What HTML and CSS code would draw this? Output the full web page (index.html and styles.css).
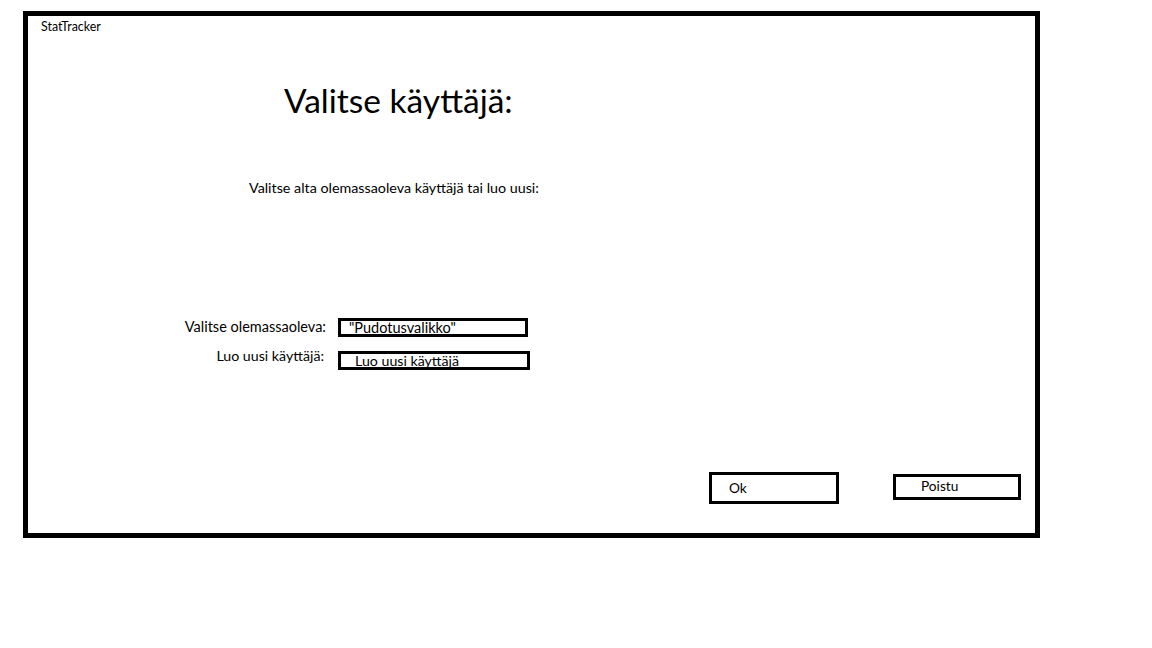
FILE: index.html
```html
<!DOCTYPE html>
<html lang="fi">
<head>
<meta charset="utf-8">
<title>StatTracker</title>
<link rel="stylesheet" href="styles.css">
</head>
<body>
<div class="frame">
  <div class="brand">StatTracker</div>
  <h1 class="heading">Valitse käyttäjä:</h1>
  <p class="intro">Valitse alta olemassaoleva käyttäjä tai luo uusi:</p>
  <div class="form">
    <div class="label label-first">Valitse olemassaoleva:</div>
    <div class="field field-select">"Pudotusvalikko"</div>
    <div class="label label-second">Luo uusi käyttäjä:</div>
    <div class="field field-new">Luo uusi käyttäjä</div>
  </div>
  <div class="actions">
    <div class="btn btn-ok">Ok</div>
    <div class="btn btn-exit">Poistu</div>
  </div>
</div>
</body>
</html>
```
FILE: styles.css
```css
html, body {
  margin: 0;
  padding: 0;
  background: #fff;
}
.frame {
  margin: 11px 0 0 23px;
  width: 1017px;
  height: 527px;
  border: 5px solid #000;
  box-sizing: border-box;
  font-family: Lato, "Open Sans", sans-serif;
  color: #000;
}
.brand {
  margin: 4px 0 0 13px;
  font-size: 12.4px;
  line-height: 14px;
}
.heading {
  margin: 46px 0 0 256px;
  font-size: 33.5px;
  line-height: 40px;
  font-weight: 400;
}
.intro {
  margin: 60px 0 0 221px;
  font-size: 14.3px;
  line-height: 16px;
}
.form {
  margin-top: 122px;
  display: grid;
  grid-template-columns: 298px auto;
  column-gap: 12px;
  row-gap: 14px;
  justify-content: start;
  font-size: 14.2px;
}
.label {
  text-align: right;
  line-height: 17px;
}
.label-first {
  font-size: 14.5px;
}
.label-second {
  padding-right: 2px;
  margin-top: -4px;
}
.field {
  height: 19px;
  border: 3px solid #000;
  box-sizing: border-box;
  line-height: 13px;
}
.field-select {
  width: 190px;
  padding-left: 8px;
  font-size: 14.5px;
}
.field-new {
  width: 192px;
  padding-left: 14px;
}
.actions {
  margin-top: 102px;
  display: flex;
  align-items: flex-start;
  font-size: 13.7px;
}
.btn {
  border: 3px solid #000;
  box-sizing: border-box;
}
.btn-ok {
  margin-left: 681px;
  width: 130px;
  height: 32px;
  padding-left: 17px;
  line-height: 26px;
}
.btn-exit {
  margin: 2px 0 0 54px;
  width: 128px;
  height: 26px;
  padding-left: 25px;
  line-height: 18px;
}
```
